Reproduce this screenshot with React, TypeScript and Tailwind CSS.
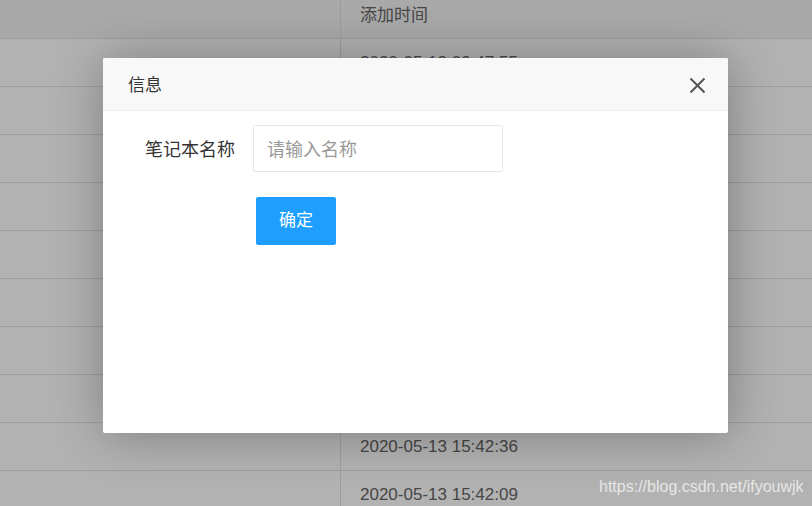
const rows = [
  "2020-05-13 09:47:55",
  "2020-05-13 09:46:21",
  "2020-05-13 09:45:02",
  "2020-05-13 09:40:18",
  "2020-05-13 09:38:44",
  "2020-05-13 09:30:10",
  "2020-05-13 09:12:33",
  "2020-05-13 16:01:27",
  "2020-05-13 15:42:36",
  "2020-05-13 15:42:09",
];

export default function App() {
  return (
    <div className="relative w-[812px] h-[506px] overflow-hidden bg-white font-['Liberation_Sans','Noto_Sans_CJK_SC',sans-serif]">
      {/* Table underneath */}
      <div className="flex flex-col">
        <div className="flex h-[39px] border-b border-[#e2e2e2] bg-[#f2f2f2]">
          <div className="w-[341px] border-r border-[#e2e2e2]" />
          <div className="flex-1 pl-[19px] flex items-center text-[17px] text-[#666] font-['Noto_Sans_CJK_SC',sans-serif] -mt-[10px]">
            添加时间
          </div>
        </div>
        {rows.map((r) => (
          <div key={r} className="flex shrink-0 h-[48px] border-b border-[#e2e2e2]">
            <div className="w-[341px] border-r border-[#e2e2e2]" />
            <div className="flex-1 pl-[19px] flex items-center text-[17px] text-[#666]">{r}</div>
          </div>
        ))}
      </div>

      {/* Overlay */}
      <div className="absolute inset-0 bg-black/30" />

      {/* Dialog */}
      <div className="absolute left-[103px] top-[58px] w-[625px] h-[375px] bg-white rounded-[2px] shadow-[1px_1px_50px_rgba(0,0,0,0.3)] flex flex-col">
        <div className="h-[53px] bg-[#f8f8f8] border-b border-[#eee] flex items-center justify-between pl-[25px] pr-[22px] rounded-t-[2px]">
          <span className="text-[17px] text-[#333] font-['Noto_Sans_CJK_SC',sans-serif]">信息</span>
          <svg width="17" height="17" viewBox="0 0 17 17" className="text-[#555] mt-[2px]">
            <path d="M1.5 1.5L15.5 15.5M15.5 1.5L1.5 15.5" stroke="currentColor" strokeWidth="2" />
          </svg>
        </div>
        <div className="flex flex-col pt-[14px] font-['Noto_Sans_CJK_SC',sans-serif]">
          <div className="flex items-center">
            <label className="w-[132px] text-right text-[18px] text-[#333]">笔记本名称</label>
            <div className="ml-[18px] w-[250px] h-[47px] border border-[#e6e6e6] rounded-[2px] flex items-center pl-[13px]">
              <input
                placeholder="请输入名称"
                className="w-full outline-none text-[18px] placeholder:text-[#999] bg-transparent"
              />
            </div>
          </div>
          <div className="flex mt-[25px] pl-[153px]">
            <button className="w-[80px] h-[48px] bg-[#1E9FFF] text-white text-[17px] rounded-[2px] pb-[5px]">确定</button>
          </div>
        </div>
      </div>

      {/* Watermark */}
      <div className="absolute left-[599px] top-[475px] text-[16px] text-white/70">
        https://blog.csdn.net/ifyouwjk
      </div>
    </div>
  );
}
